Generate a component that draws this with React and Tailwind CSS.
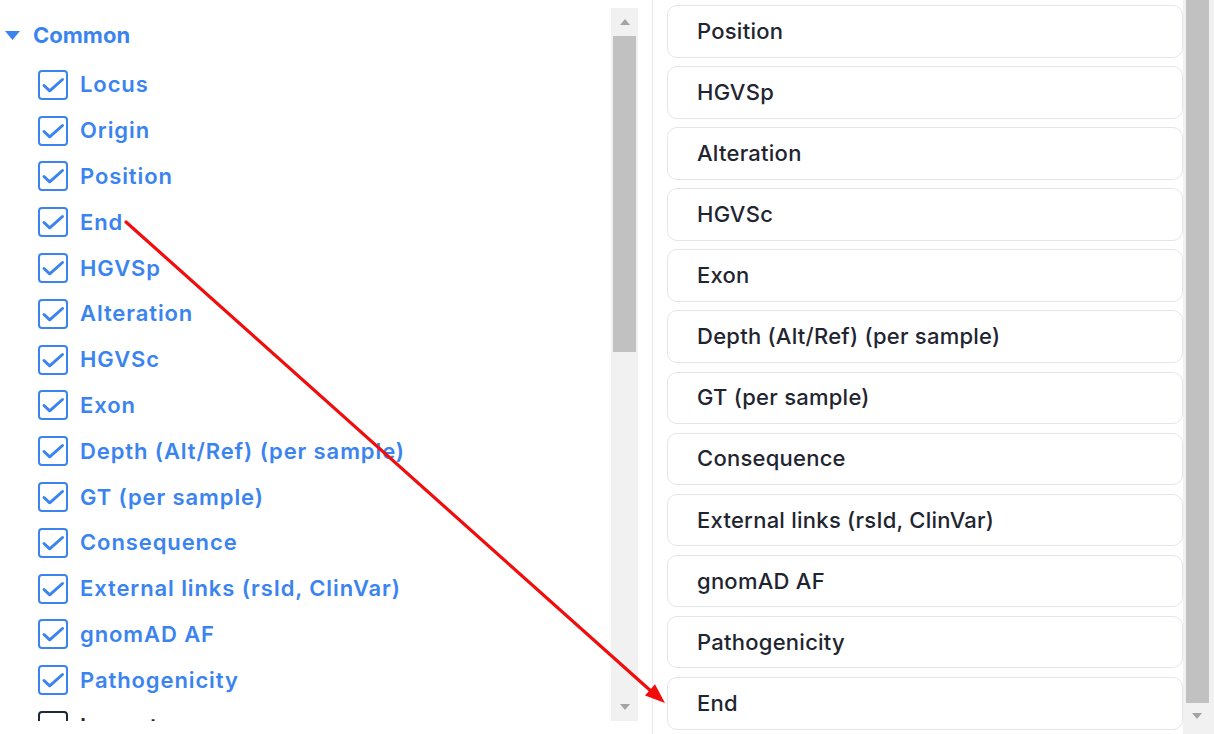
import React from "react";

const COMMON = [
  { label: "Locus", checked: true },
  { label: "Origin", checked: true },
  { label: "Position", checked: true },
  { label: "End", checked: true },
  { label: "HGVSp", checked: true },
  { label: "Alteration", checked: true },
  { label: "HGVSc", checked: true },
  { label: "Exon", checked: true },
  { label: "Depth (Alt/Ref) (per sample)", checked: true },
  { label: "GT (per sample)", checked: true },
  { label: "Consequence", checked: true },
  { label: "External links (rsId, ClinVar)", checked: true },
  { label: "gnomAD AF", checked: true },
  { label: "Pathogenicity", checked: true },
  { label: "Impact", checked: false },
];

const SELECTED = [
  "Position",
  "HGVSp",
  "Alteration",
  "HGVSc",
  "Exon",
  "Depth (Alt/Ref) (per sample)",
  "GT (per sample)",
  "Consequence",
  "External links (rsId, ClinVar)",
  "gnomAD AF",
  "Pathogenicity",
  "End",
];

const Checkbox = ({ checked }) =>
  checked ? (
    <span className="w-[30px] h-[30px] shrink-0 rounded-[4px] border-2 border-[#3b84f0] flex items-center justify-center">
      <svg width="26" height="26" viewBox="0 0 26 26" fill="none">
        <path
          d="M4 13.5 L9.7 18.8 L22.5 7.5"
          stroke="#3b84f0"
          strokeWidth="3"
          strokeLinecap="round"
          strokeLinejoin="round"
        />
      </svg>
    </span>
  ) : (
    <span className="w-[30px] h-[30px] shrink-0 rounded-[4px] border-2 border-[#1f2937]" />
  );

const ArrowUp = () => (
  <svg width="10" height="6" viewBox="0 0 10 6">
    <path d="M0 6 L5 0 L10 6 Z" fill="#a3a3a3" />
  </svg>
);

const ArrowDown = () => (
  <svg width="10" height="6" viewBox="0 0 10 6">
    <path d="M0 0 L10 0 L5 6 Z" fill="#a3a3a3" />
  </svg>
);

export default function App() {
  return (
    <div className="relative flex h-[734px] w-[1214px] overflow-hidden bg-white font-['Inter','Noto_Sans',sans-serif]">
      {/* Available columns */}
      <div className="w-[653px] shrink-0 flex pt-[8px] pb-[13px] pr-[14px] border-r border-[#e5e7eb]">
        <div className="flex-1 overflow-hidden pt-[4px]">
          <div className="h-[46px] flex items-center pl-[5px] gap-[13px]">
            <svg width="15" height="9" viewBox="0 0 15 9">
              <path d="M0 0 L15 0 L7.5 9 Z" fill="#3b84f0" />
            </svg>
            <span className="text-[22px] font-bold text-[#3b84f0]">
              Common
            </span>
          </div>
          <ul className="mt-[4px]">
            {COMMON.map((item) => (
              <li
                key={item.label}
                className="h-[45.8px] flex items-center pl-[38px] gap-[12px]"
              >
                <Checkbox checked={item.checked} />
                <span
                  className={`text-[22px] font-semibold tracking-[0.9px] whitespace-nowrap ${
                    item.checked ? "text-[#3b84f0]" : "text-[#1f2937]"
                  }`}
                >
                  {item.label}
                </span>
              </li>
            ))}
          </ul>
        </div>
        <div className="w-[27px] shrink-0 bg-[#f1f1f1] flex flex-col">
          <div className="h-[28px] flex items-center justify-center">
            <ArrowUp />
          </div>
          <div className="h-[316px] mx-[2px] bg-[#c1c1c1]" />
          <div className="flex-1" />
          <div className="h-[28px] flex items-center justify-center">
            <ArrowDown />
          </div>
        </div>
      </div>

      {/* Selected columns */}
      <div className="flex-1 flex">
        <div className="flex-1 flex flex-col gap-[8.6px] pt-[5px] pl-[14px]">
          {SELECTED.map((label) => (
            <div
              key={label}
              className="h-[52.5px] shrink-0 flex items-center pl-[29px] rounded-[10px] border border-[#e3e5eb] bg-white"
            >
              <span className="text-[22px] font-medium tracking-[0.25px] text-[#1f2530] whitespace-nowrap">
                {label}
              </span>
            </div>
          ))}
        </div>
        <div className="w-[31px] shrink-0 bg-[#f1f1f1] flex flex-col">
          <div className="h-[703px] ml-[3px] w-[23px] bg-[#c1c1c1]" />
          <div className="h-[26px] flex items-center justify-center pr-[4px]">
            <ArrowDown />
          </div>
        </div>
      </div>

      {/* Annotation arrow */}
      <svg
        className="absolute inset-0 pointer-events-none"
        width="1214"
        height="734"
        viewBox="0 0 1214 734"
      >
        <line
          x1="126"
          y1="222"
          x2="652"
          y2="692"
          stroke="#f20d0d"
          strokeWidth="3.2"
          strokeLinecap="round"
        />
        <path d="M665 703 L645 695.5 L655 684.3 Z" fill="#f20d0d" />
      </svg>
    </div>
  );
}
